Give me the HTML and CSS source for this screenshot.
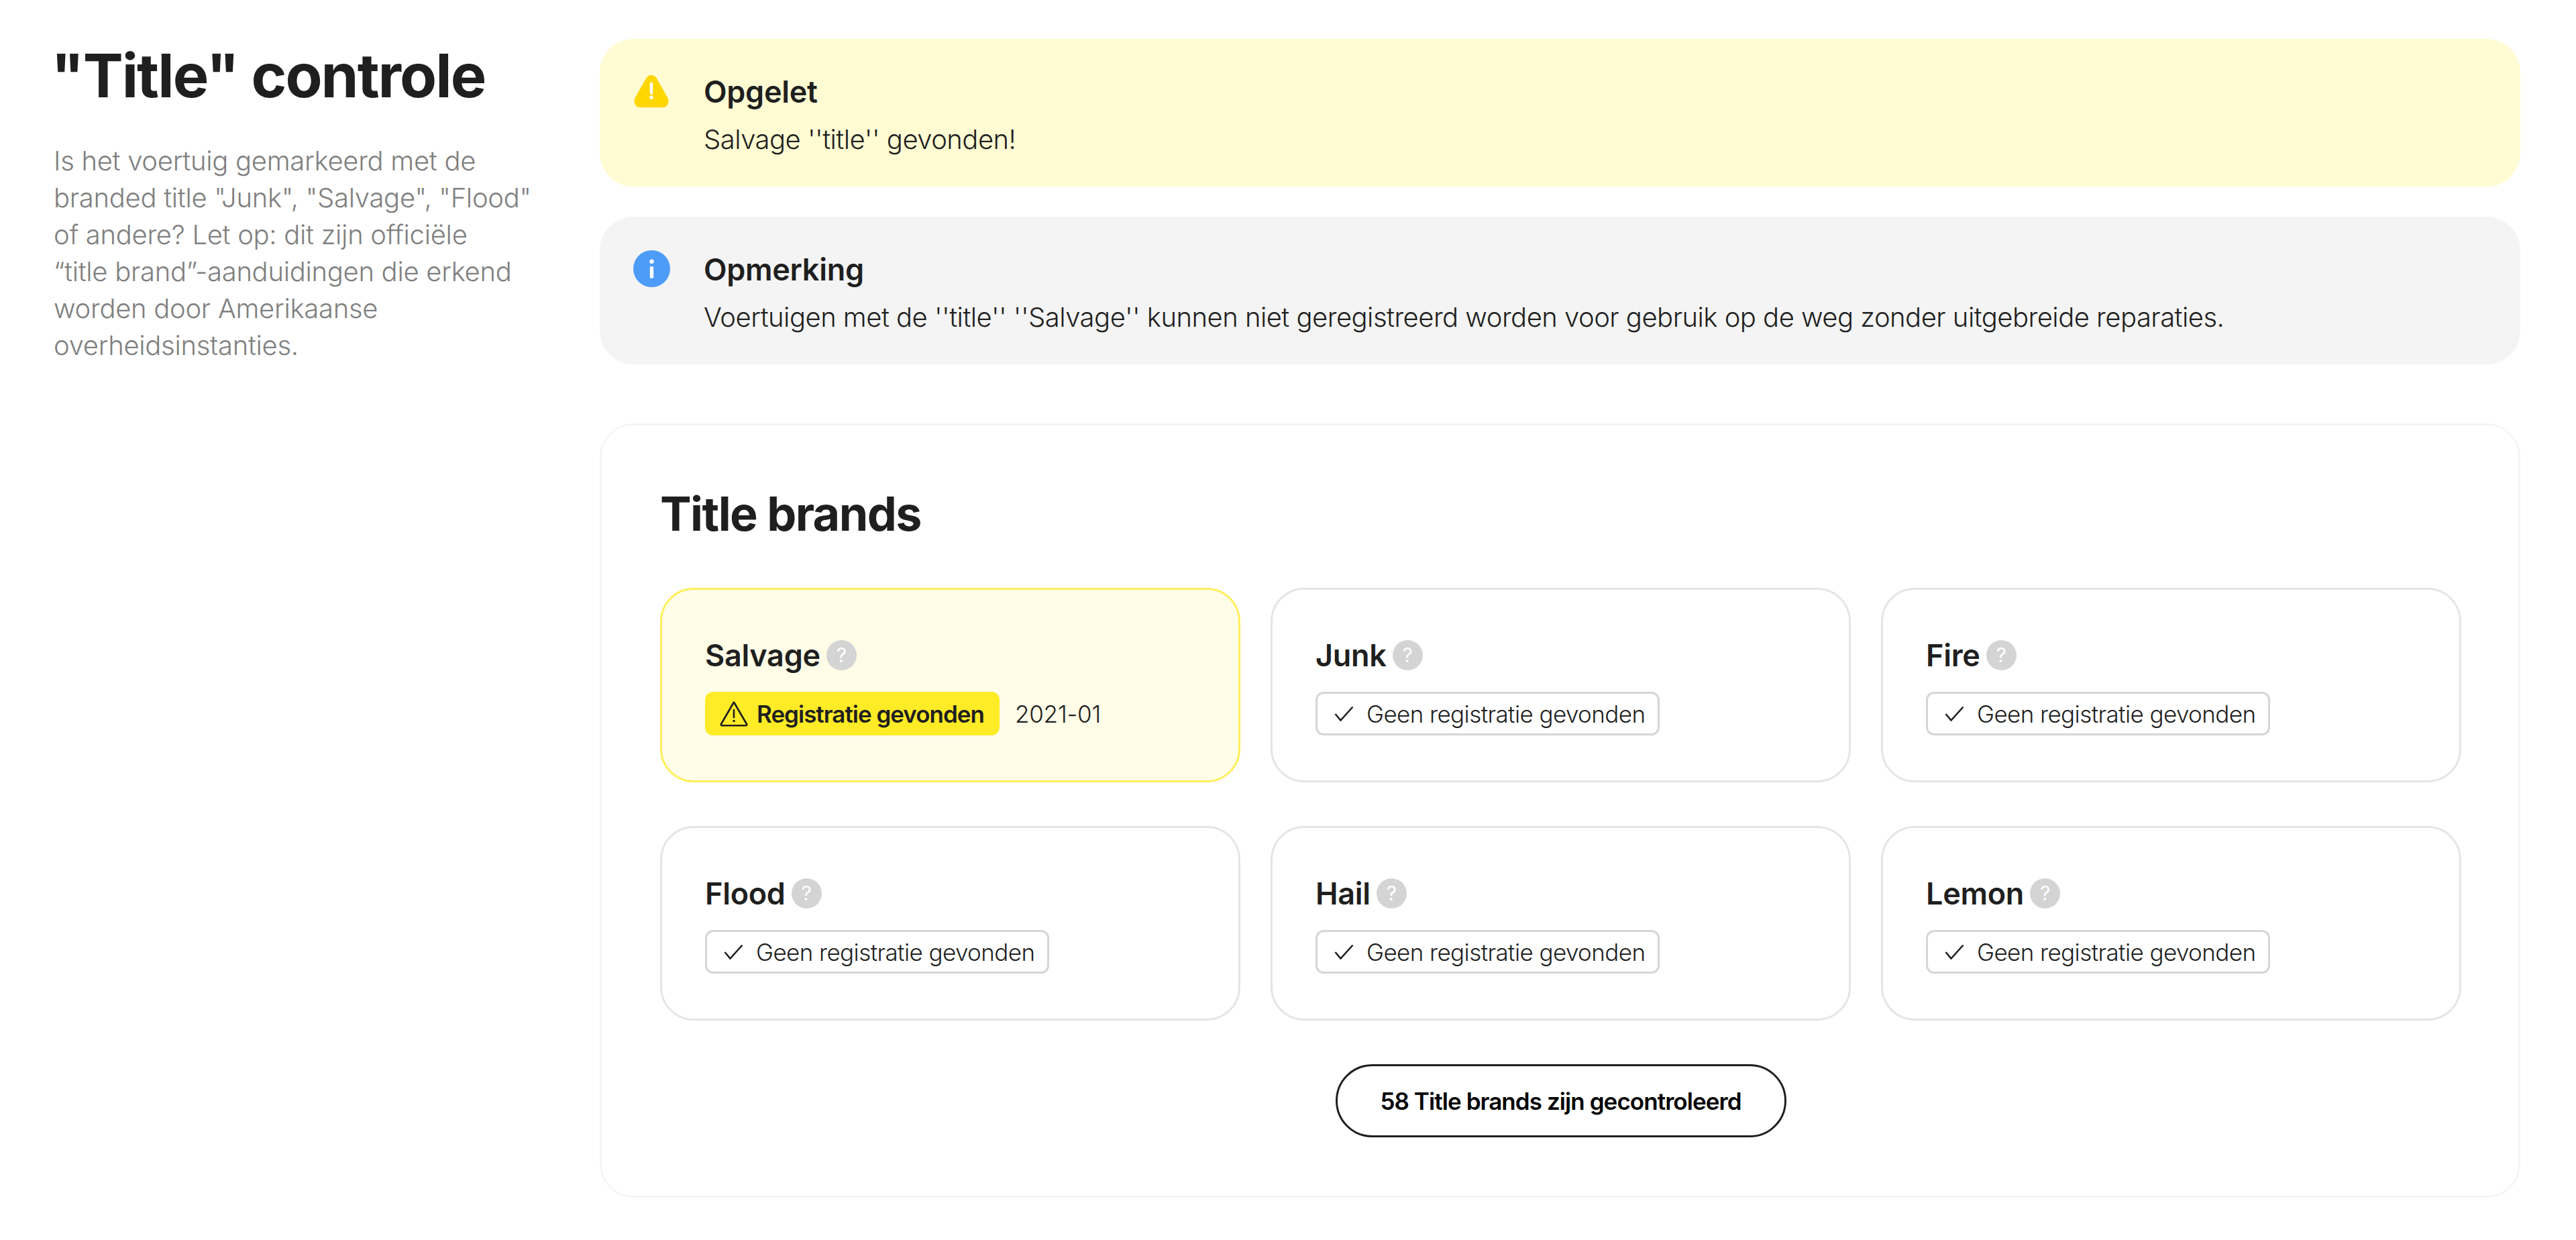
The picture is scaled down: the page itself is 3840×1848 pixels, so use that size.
FILE: index.html
```html
<!DOCTYPE html>
<html>
<head>
  <title>Title controle</title>
  <link rel="stylesheet" href="styles.css">
</head>
<body>
  <div class="page">
    <aside class="intro">
      <h1>"Title" controle</h1>
      <p>Is het voertuig gemarkeerd met de branded title "Junk", "Salvage", "Flood" of andere? Let op: dit zijn officiële<br>“title brand”-aanduidingen die erkend worden door Amerikaanse overheidsinstanties.</p>
    </aside>
    <main class="content">
      <div class="alert alert-warning">
        <svg class="alert-icon" viewBox="0 0 56 56"><path d="M27.500 4c3.500 0 6 1.800 8 5L52 38c3.500 6 .5 15-7.500 15h-34C2.500 53-.5 44 3 38L19.500 9c2-3.200 4.500-5 8-5z" fill="#ffd600"/><path d="M27.500 17v14" stroke="#fff" stroke-width="4.500" stroke-linecap="round"/><circle cx="27.500" cy="38" r="2.800" fill="#fff"/></svg>
        <div>
          <h3>Opgelet</h3>
          <p>Salvage ''title'' gevonden!</p>
        </div>
      </div>
      <div class="alert alert-info">
        <svg class="alert-icon" viewBox="0 0 56 56"><circle cx="28" cy="28" r="28" fill="#4d9cf8"/><circle cx="28" cy="17" r="3.300" fill="#fff"/><path d="M28 27v13" stroke="#fff" stroke-width="5.500" stroke-linecap="round"/></svg>
        <div>
          <h3>Opmerking</h3>
          <p>Voertuigen met de ''title'' ''Salvage'' kunnen niet geregistreerd worden voor gebruik op de weg zonder uitgebreide reparaties.</p>
        </div>
      </div>

      <section class="panel">
        <h2>Title brands</h2>
        <div class="brands">
          <div class="brand brand-found">
            <div class="brand-name">Salvage <span class="help">?</span></div>
            <div class="brand-status">
              <span class="badge badge-found">
                <svg class="badge-icon" viewBox="0 0 42 38"><path d="M21 1.500L40 34a1.500 1.500 0 0 1-1.300 2.300H3.300A1.500 1.500 0 0 1 2 34z" fill="none" stroke="#1f1f1f" stroke-width="2.600" stroke-linejoin="round"/><path d="M21 13v11" stroke="#1f1f1f" stroke-width="2.600" stroke-linecap="round"/><circle cx="21" cy="29.500" r="1.800" fill="#1f1f1f"/></svg>
                Registratie gevonden
              </span>
              <span class="date">2021-01</span>
            </div>
          </div>
          <div class="brand">
            <div class="brand-name">Junk <span class="help">?</span></div>
            <div class="brand-status">
              <span class="badge"><svg class="check" viewBox="0 0 29 23"><path d="M1.500 12l8 9.500L27.500 1.500" fill="none" stroke="#1f1f1f" stroke-width="2.600"/></svg>Geen registratie gevonden</span>
            </div>
          </div>
          <div class="brand">
            <div class="brand-name">Fire <span class="help">?</span></div>
            <div class="brand-status">
              <span class="badge"><svg class="check" viewBox="0 0 29 23"><path d="M1.500 12l8 9.500L27.500 1.500" fill="none" stroke="#1f1f1f" stroke-width="2.600"/></svg>Geen registratie gevonden</span>
            </div>
          </div>
          <div class="brand">
            <div class="brand-name">Flood <span class="help">?</span></div>
            <div class="brand-status">
              <span class="badge"><svg class="check" viewBox="0 0 29 23"><path d="M1.500 12l8 9.500L27.500 1.500" fill="none" stroke="#1f1f1f" stroke-width="2.600"/></svg>Geen registratie gevonden</span>
            </div>
          </div>
          <div class="brand">
            <div class="brand-name">Hail <span class="help">?</span></div>
            <div class="brand-status">
              <span class="badge"><svg class="check" viewBox="0 0 29 23"><path d="M1.500 12l8 9.500L27.500 1.500" fill="none" stroke="#1f1f1f" stroke-width="2.600"/></svg>Geen registratie gevonden</span>
            </div>
          </div>
          <div class="brand">
            <div class="brand-name">Lemon <span class="help">?</span></div>
            <div class="brand-status">
              <span class="badge"><svg class="check" viewBox="0 0 29 23"><path d="M1.500 12l8 9.500L27.500 1.500" fill="none" stroke="#1f1f1f" stroke-width="2.600"/></svg>Geen registratie gevonden</span>
            </div>
          </div>
        </div>
        <div class="panel-footer">
          <button class="more-button">58 Title brands zijn gecontroleerd</button>
        </div>
      </section>
    </main>
  </div>
</body>
</html>
```

FILE: styles.css
```css
body {
  font-family: Inter, "Liberation Sans", sans-serif;
  background-color: #fff;
  color: #1f1f1f;
  margin: 0;
}

.page {
  display: flex;
  gap: 100px;
  padding: 58px 83px 60px 76px;
}

.intro {
  flex: 0 0 718px;
}

.intro h1 {
  font-size: 90px;
  line-height: 110px;
  font-weight: 700;
  letter-spacing: -2px;
  margin: 0 0 44px;
}

.intro p {
  font-size: 40px;
  line-height: 55px;
  font-weight: 300;
  letter-spacing: -0.3px;
  color: #808080;
  margin: 0 0 0 4px;
}

.content {
  flex: 1;
  min-width: 0;
}

.alert {
  display: flex;
  gap: 50px;
  height: 220px;
  box-sizing: border-box;
  padding: 50px;
  border-radius: 50px;
  margin-bottom: 45px;
}

.alert-warning {
  background-color: #fffbd3;
}

.alert-info {
  background-color: #f4f4f4;
}

.alert-icon {
  flex: none;
  width: 55px;
  height: 55px;
}

.alert h3 {
  font-size: 45px;
  line-height: 58px;
  font-weight: 600;
  letter-spacing: -0.3px;
  margin: 0 0 14px;
}

.alert p {
  font-size: 40px;
  line-height: 55px;
  font-weight: 350;
  letter-spacing: -0.53px;
  margin: 0;
}

.panel {
  border: 3px solid #f5f5f5;
  border-radius: 50px;
  padding: 87px 85px 87px 87px;
  margin-top: 88px;
}

.panel h2 {
  font-size: 70px;
  line-height: 90px;
  font-weight: 700;
  letter-spacing: -1.6px;
  margin: 0 0 65px;
}

.brands {
  display: grid;
  grid-template-columns: repeat(3, 1fr);
  gap: 65px 45px;
}

.brand {
  border: 3px solid #e5e5e5;
  border-radius: 50px;
  height: 290px;
  box-sizing: border-box;
  padding: 65px 64px;
}

.brand-found {
  background-color: #fffce8;
  border-color: #ffef5c;
}

.brand-name {
  display: flex;
  align-items: center;
  gap: 9px;
  font-size: 45px;
  line-height: 65px;
  font-weight: 600;
  letter-spacing: -0.3px;
}

.help {
  display: inline-flex;
  align-items: center;
  justify-content: center;
  width: 45px;
  height: 45px;
  border-radius: 50%;
  background-color: #d4d4d4;
  color: #fff;
  font-size: 30px;
  font-weight: 400;
}

.brand-status {
  display: flex;
  align-items: center;
  gap: 23px;
  margin-top: 22px;
}

.badge {
  display: inline-flex;
  align-items: center;
  height: 65px;
  box-sizing: border-box;
  padding: 0 19px 0 25px;
  border: 3px solid #d6d6d6;
  border-radius: 12px;
  font-size: 35px;
  font-weight: 350;
  letter-spacing: -0.6px;
}

.badge-found {
  background-color: #ffeb26;
  border: none;
  padding: 0 23px 0 22px;
  font-weight: 600;
  letter-spacing: -1px;
  gap: 13px;
}

.badge-icon {
  width: 42px;
  height: 38px;
}

.check {
  width: 29px;
  height: 23px;
  margin-right: 19px;
}

.date {
  font-size: 35px;
  font-weight: 300;
  letter-spacing: -0.2px;
}

.panel-footer {
  display: flex;
  justify-content: center;
  margin-top: 65px;
}

.more-button {
  height: 109px;
  width: 672px;
  background-color: #fff;
  border: 3px solid #1f1f1f;
  border-radius: 55px;
  font-family: inherit;
  font-size: 35px;
  font-weight: 600;
  letter-spacing: -0.93px;
  color: #000;
}
```
